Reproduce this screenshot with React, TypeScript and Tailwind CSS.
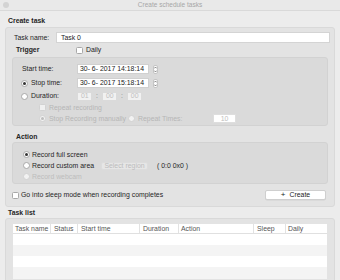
import React from "react";

const Radio = ({ on = false, disabled = false }: { on?: boolean; disabled?: boolean }) => (
  <span
    className={`inline-flex items-center justify-center w-[7px] h-[7px] rounded-full border shrink-0 ${
      disabled ? "border-[#d2d2d2] bg-[#f2f2f2]" : "border-[#a8a8a8] bg-white"
    }`}
  >
    {on && <span className={`w-[3px] h-[3px] rounded-full ${disabled ? "bg-[#bdbdbd]" : "bg-[#333]"}`} />}
  </span>
);

const Check = ({ disabled = false }: { disabled?: boolean }) => (
  <span
    className={`inline-block w-[7px] h-[7px] rounded-[1.5px] border shrink-0 ${
      disabled ? "border-[#d2d2d2] bg-[#f0f0f0]" : "border-[#a8a8a8] bg-white"
    }`}
  />
);

const Stepper = () => (
  <span className="ml-[4px] inline-flex flex-col items-center justify-center w-[5px] h-[9px] rounded-[2px] border border-[#c4c4c4] bg-white">
    <svg width="3" height="7" viewBox="0 0 3 7">
      <path d="M0.3 2.4 L1.5 1 L2.7 2.4" fill="none" stroke="#555" strokeWidth="0.7" />
      <path d="M0.3 4.6 L1.5 6 L2.7 4.6" fill="none" stroke="#555" strokeWidth="0.7" />
    </svg>
  </span>
);

const DateField = ({ value }: { value: string }) => (
  <div className="flex items-center">
    <div className="w-[72px] h-[10px] bg-white border border-[#d0d0d0] flex items-center pl-[2px] text-[#222] whitespace-nowrap overflow-hidden">
      {value}
    </div>
    <Stepper />
  </div>
);

const SmallBox = ({ v }: { v: string }) => (
  <div className="w-[15px] h-[9px] bg-[#f1f1f1] border border-[#dadada] flex items-center pl-[3px] text-[#c0c0c0]">
    {v}
  </div>
);

export default function App() {
  return (
    <div
      className="w-[340px] h-[280px] bg-[#ececec] overflow-hidden text-[6.9px] leading-[8px] text-[#262626]"
      style={{ fontFamily: '"Liberation Sans", Arial, sans-serif' }}
    >
      {/* Title bar */}
      <div className="relative h-[11px] flex items-center justify-center border-b border-[#d9d9d9] bg-[#e9e9e9] text-[6.5px]">
        <span className="absolute left-[3px] top-[2px] w-[6px] h-[6px] rounded-full bg-[#d3d3d3]" />
        <span className="text-[#a6a6a6]">Create schedule tasks</span>
      </div>

      {/* Create task label */}
      <div className="h-[16px] flex items-end pl-[8px] pb-[2px] font-bold text-[#1e1e1e]">Create task</div>

      {/* Outer group */}
      <div className="mx-[5px] h-[180px] bg-[#e3e3e3] border border-[#d9d9d9] rounded-[3px] px-[6px] flex flex-col">
        <div className="mt-[4px] h-[11px] flex items-center">
          <span className="w-[44px] pl-[2px]">Task name:</span>
          <div className="flex-1 h-[11px] mr-[-2px] bg-white border border-[#d4d4d4] flex items-center pl-[4px] text-[#222]">
            Task 0
          </div>
        </div>

        <div className="h-[14px] flex items-center">
          <span className="w-[64px] pl-[4px] font-bold text-[#262626]">Trigger</span>
          <Check />
          <span className="ml-[3px]">Daily</span>
        </div>

        {/* Trigger box */}
        <div className="h-[69px] bg-[#dadada] border border-[#d2d2d2] rounded-[3px] pt-[4px] flex flex-col">
          <div className="h-[14px] flex items-center">
            <span className="w-[64px] pl-[9px]">Start time:</span>
            <DateField value="30- 6- 2017 14:18:14" />
          </div>
          <div className="h-[14px] flex items-center">
            <span className="w-[64px] pl-[8px] flex items-center">
              <Radio on />
              <span className="ml-[3px]">Stop time:</span>
            </span>
            <DateField value="30- 6- 2017 15:18:14" />
          </div>
          <div className="h-[12px] flex items-center">
            <span className="w-[64px] pl-[8px] flex items-center">
              <Radio />
              <span className="ml-[3px]">Duration:</span>
            </span>
            <div className="flex items-center">
              <SmallBox v="01" />
              <span className="mx-[4px] text-[#888]">:</span>
              <SmallBox v="00" />
              <span className="mx-[4px] text-[#888]">:</span>
              <SmallBox v="00" />
            </div>
          </div>
          <div className="h-[11px] flex items-center pl-[26px] text-[#b6b6b6]">
            <Check disabled />
            <span className="ml-[3px]">Repeat recording</span>
          </div>
          <div className="h-[11px] flex items-center pl-[26px] text-[#b6b6b6]">
            <Radio on disabled />
            <span className="ml-[3px] w-[79px] whitespace-nowrap">Stop Recording manually</span>
            <Radio disabled />
            <span className="ml-[3px] w-[75px]">Repeat Times:</span>
            <div className="w-[23px] h-[9px] bg-white border border-[#dedede] flex items-center justify-center text-[#c0c0c0]">
              10
            </div>
          </div>
        </div>

        <div className="h-[16px] flex items-end pb-[1px] pl-[4px] font-bold">Action</div>

        {/* Action box */}
        <div className="h-[42px] bg-[#dadada] border border-[#d2d2d2] rounded-[3px] pt-[6px] flex flex-col">
          <div className="h-[11px] flex items-center pl-[10px]">
            <Radio on />
            <span className="ml-[2px]">Record full screen</span>
          </div>
          <div className="h-[11px] flex items-center pl-[10px]">
            <Radio />
            <span className="ml-[2px] w-[69px]">Record custom area</span>
            <div className="w-[47px] h-[8px] bg-[#e6e6e6] border border-[#dcdcdc] rounded-[2px] flex items-center justify-center text-[#bcbcbc] whitespace-nowrap">
              Select region
            </div>
            <span className="ml-[9px]">( 0:0 0x0 )</span>
          </div>
          <div className="h-[11px] flex items-center pl-[10px] text-[#bdbdbd]">
            <Radio disabled />
            <span className="ml-[2px]">Record webcam</span>
          </div>
        </div>

        <div className="flex-1 flex items-center">
          <Check />
          <span className="ml-[2px] flex-1">Go into sleep mode when recording completes</span>
          <div className="w-[61px] h-[10px] mr-[2px] bg-white border border-[#cfcfcf] rounded-[2px] flex items-center justify-center gap-[4px] text-[#222] shadow-[0_0.5px_0.5px_rgba(0,0,0,0.08)]">
            <span className="text-[8px] leading-[8px]">+</span>
            <span>Create</span>
          </div>
        </div>
      </div>

      {/* Task list */}
      <div className="h-[11px] flex items-end pl-[8px] pb-[1px] font-bold">Task list</div>
      <div className="mx-[5px] h-[70px] bg-[#e3e3e3] border border-[#d9d9d9] rounded-t-[3px] px-[7px] pt-[5px]">
        <div className="bg-white">
          <div className="h-[10px] flex items-center border-b border-[#e0e0e0] text-[#555] whitespace-nowrap">
            <span className="w-[38px] pl-[2px] h-full flex items-center border-r border-[#e2e2e2]">Task name</span>
            <span className="w-[27px] pl-[3px] h-full flex items-center border-r border-[#e2e2e2]">Status</span>
            <span className="w-[62px] pl-[3px] h-full flex items-center border-r border-[#e2e2e2]">Start time</span>
            <span className="w-[39px] pl-[3px] h-full flex items-center border-r border-[#e2e2e2]">Duration</span>
            <span className="w-[75px] pl-[2px] h-full flex items-center border-r border-[#e2e2e2]">Action</span>
            <span className="w-[32px] pl-[3px] h-full flex items-center border-r border-[#e2e2e2]">Sleep</span>
            <span className="flex-1 pl-[2px] h-full flex items-center">Daily</span>
          </div>
          <div className="h-[11px] bg-white" />
          <div className="h-[11px] bg-[#f4f4f4]" />
          <div className="h-[11px] bg-white" />
          <div className="h-[12px] bg-[#f4f4f4]" />
        </div>
      </div>
    </div>
  );
}
